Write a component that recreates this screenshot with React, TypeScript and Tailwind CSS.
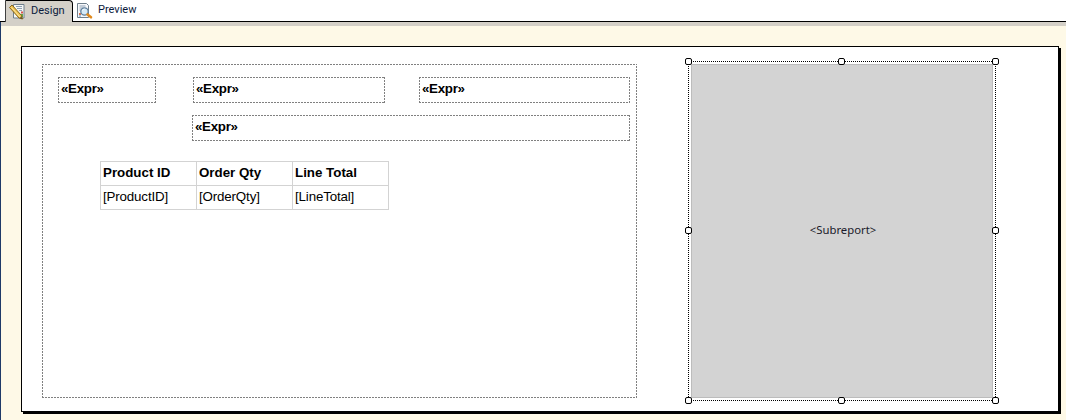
import React from 'react';

const uiFont = "font-['Noto_Sans',sans-serif]";
const reportFont = "font-['Liberation_Sans',Arial,sans-serif]";

// GDI style dash: 2px on, 1px off, which a css dashed border can't do
const dashed = "bg-no-repeat [background-image:repeating-linear-gradient(90deg,#808080_0_2px,transparent_2px_3px),repeating-linear-gradient(90deg,#808080_0_2px,transparent_2px_3px),repeating-linear-gradient(0deg,#808080_0_2px,transparent_2px_3px),repeating-linear-gradient(0deg,#808080_0_2px,transparent_2px_3px)] [background-size:100%_1px,100%_1px,1px_100%,1px_100%] [background-position:0_0,0_100%,0_0,100%_0]";

const DesignIcon = () => (
    <svg width="18" height="18" viewBox="0 0 18 18" className="shrink-0">
        {/* sheet */}
        <path d="M5.500 1.500h10.500v13.500h-10.500z" fill="#f4f6f4" stroke="#6f7f8c" />
        <path d="M8 3.500h6M9 5.500h5M11 7.500h3" stroke="#8fa0b4" />
        <path d="M13 11h2v3h-2z" fill="#5fa84a" />
        <path d="M13 8.500h2v2h-2z" fill="#d9534f" />
        {/* pencil */}
        <path d="M1.500 4.500l2.500-2.500 9.500 10.500 1 3.500-3.500-1z" fill="#efc14e" stroke="#7a5a12" strokeWidth="0.9" />
        <path d="M3.500 4.500l8.500 9.500" stroke="#fbe9a8" />
        <path d="M12 15l2 .8-.7-2.200z" fill="#3a3a3a" />
    </svg>
);

const PreviewIcon = () => (
    <svg width="18" height="18" viewBox="0 0 18 18" className="shrink-0">
        {/* sheet */}
        <path d="M1.500 1.500h9l2 2v12h-11z" fill="#f7f8fa" stroke="#6f7f8c" />
        <path d="M3.500 4h6M3.500 6h4M3.500 8h2" stroke="#8fa0b4" />
        <path d="M3 11h2v2H3z" fill="#d9734f" />
        <path d="M3 13.500h2v1H3z" fill="#5f8fc0" />
        {/* magnifier */}
        <circle cx="8.500" cy="9.500" r="3.700" fill="#d6eaf7" stroke="#5f7f9c" strokeWidth="1.300" />
        <path d="M6.500 8.500a2.500 2.500 0 0 1 2-1.500" stroke="#ffffff" fill="none" />
        <path d="M11.500 12.500l3.500 2.800" stroke="#e08a1e" strokeWidth="2.600" strokeLinecap="round" />
    </svg>
);

const Handle = ({ className }: { className: string }) => (
    <div className={`absolute w-[7px] h-[7px] bg-white border border-black rounded-[2px] ${className}`}></div>
);

const ExprBox = ({ className }: { className: string }) => (
    <div className={`h-[26px] shrink-0 pl-[3px] text-[13.33px] tracking-[-0.3px] leading-[23px] font-bold text-black ${dashed} ${className}`}>
        «Expr»
    </div>
);

const columns = [
    { title: 'Product ID', field: '[ProductID]' },
    { title: 'Order Qty', field: '[OrderQty]' },
    { title: 'Line Total', field: '[LineTotal]' },
];

const App = () => {
    return (
        <div className={`w-[1066px] h-[420px] overflow-hidden flex flex-col bg-white ${uiFont}`}>
            {/* Tabs */}
            <div className="h-[22px] shrink-0 flex items-end pl-[5px] border-b border-black bg-white">
                <div className="relative top-px h-[22px] w-[68px] flex items-center gap-[5px] pl-[2px] bg-[#d4d0c8] border-l border-r border-t border-l-[#404040] border-r-black border-t-black rounded-tr-[4px] font-['Roboto',sans-serif] text-[11px] text-[#0a1a3c]">
                    <DesignIcon />
                    <span>Design</span>
                </div>
                <div className="h-[21px] flex items-center gap-[4px] pl-[3px] font-['Roboto',sans-serif] text-[11px] text-[#0a1a3c]">
                    <PreviewIcon />
                    <span>Preview</span>
                </div>
            </div>

            {/* Design surface */}
            <div className="flex-1 flex flex-col border-l border-[#1f3a68]">
                <div className="h-[4px] shrink-0 bg-[#d4d0c8]"></div>
                <div className="flex-1 bg-[#fef9e7] pt-[20px] pl-[20px]">
                    <div className={`w-[1038px] h-[366px] flex items-start pl-[20px] pt-[14px] bg-white border border-black shadow-[2px_2px_0_0_#000] ${reportFont}`}>
                        {/* Rectangle with the fields and the table */}
                        <div className={`mt-[3px] w-[595px] h-[334px] shrink-0 flex flex-col items-start pl-[16px] pt-[13px] ${dashed}`}>
                            <div className="flex">
                                <ExprBox className="w-[98px]" />
                                <ExprBox className="ml-[37px] w-[192px]" />
                                <ExprBox className="ml-[34px] w-[211px]" />
                            </div>
                            <ExprBox className="mt-[12px] ml-[134px] w-[438px]" />

                            <div className="mt-[20px] ml-[42px] w-[289px] grid grid-cols-3 border-t border-l border-[#d3d3d3] text-[13.33px] leading-[21px] text-black">
                                {columns.map((col) => (
                                    <div key={col.title} className="h-[24px] pl-[2px] font-bold border-r border-b border-[#d3d3d3]">
                                        {col.title}
                                    </div>
                                ))}
                                {columns.map((col) => (
                                    <div key={col.field} className="h-[24px] pl-[2px] tracking-[-0.15px] border-r border-b border-[#d3d3d3]">
                                        {col.field}
                                    </div>
                                ))}
                            </div>
                        </div>

                        {/* Selected subreport */}
                        <div className="relative ml-[51px] w-[308px] h-[340px] shrink-0 p-[2px] border border-dotted border-black">
                            <div className={`w-full h-full pb-[2px] pl-[2px] flex items-center justify-center bg-[#d3d3d3] border border-[#bcbcbc] text-[11.3px] text-[#1a1a2a] ${uiFont}`}>
                                {'<Subreport>'}
                            </div>
                            <Handle className="-left-[4px] -top-[4px]" />
                            <Handle className="left-[149px] -top-[4px]" />
                            <Handle className="-right-[4px] -top-[4px]" />
                            <Handle className="-left-[4px] top-[165px]" />
                            <Handle className="-right-[4px] top-[165px]" />
                            <Handle className="-left-[4px] -bottom-[4px]" />
                            <Handle className="left-[149px] -bottom-[4px]" />
                            <Handle className="-right-[4px] -bottom-[4px]" />
                        </div>
                    </div>
                </div>
            </div>
        </div>
    );
};

export default App;
